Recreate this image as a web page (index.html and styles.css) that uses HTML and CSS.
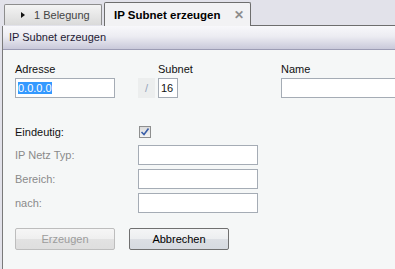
FILE: index.html
```html
<!DOCTYPE html>
<html lang="de">
<head>
    <meta charset="UTF-8">
    <title>IP Subnet erzeugen</title>
    <link rel="stylesheet" href="styles.css">
</head>
<body>
    <div class="tabstrip">
        <div class="tab">
            <span class="tab-arrow"></span>
            <span>1 Belegung</span>
        </div>
        <div class="tab tab-active">
            <span>IP Subnet erzeugen</span>
            <span class="tab-close">✕</span>
        </div>
        <div class="tab-rest"></div>
    </div>

    <div class="panel">
        <div class="panel-title">IP Subnet erzeugen</div>

        <div class="panel-body">
            <div class="top-row">
                <div class="field field-addr">
                    <label>Adresse</label>
                    <div class="textbox"><span class="selected">0.0.0.0</span></div>
                </div>
                <div class="slash">/</div>
                <div class="field field-subnet">
                    <label>Subnet</label>
                    <div class="textbox">16</div>
                </div>
                <div class="field field-name">
                    <label>Name</label>
                    <div class="textbox"></div>
                </div>
            </div>

            <div class="form-grid">
                <label class="form-label form-label-on">Eindeutig:</label>
                <div class="checkbox">
                    <svg width="10" height="10" viewBox="0 0 10 10">
                        <path d="M1.5 5 L4 7.5 L8.5 1.5" fill="none" stroke="#3b5fa8" stroke-width="1.6"/>
                    </svg>
                </div>

                <label class="form-label">IP Netz Typ:</label>
                <div class="textbox"></div>

                <label class="form-label">Bereich:</label>
                <div class="textbox"></div>

                <label class="form-label">nach:</label>
                <div class="textbox"></div>
            </div>

            <div class="buttons">
                <button class="btn btn-disabled">Erzeugen</button>
                <button class="btn">Abbrechen</button>
            </div>
        </div>
    </div>
</body>
</html>
```

FILE: styles.css
```css
:root {
    --frame: #e2e2ea;
    --panel-bg: #f5f7f7;
    --border-dark: #6e6e6e;
    --input-border: #a5acb5;
    --label-gray: #8a8a8a;
}

html, body {
    margin: 0;
    padding: 0;
}

body {
    width: 395px;
    height: 269px;
    overflow: hidden;
    background-color: var(--frame);
    font-family: 'Liberation Sans', Arial, sans-serif;
    font-size: 11px;
    color: #111;
}

/* tabs */

.tabstrip {
    display: flex;
    align-items: flex-end;
    height: 26px;
    padding-left: 4px;
    box-sizing: border-box;
}

.tab {
    display: flex;
    align-items: center;
    flex-shrink: 0;
    box-sizing: border-box;
    height: 21px;
    width: 98px;
    margin-bottom: 1px;
    padding-left: 16px;
    border: 1px solid #8d8d8d;
    border-bottom: none;
    border-radius: 2px 2px 0 0;
    background: linear-gradient(#f4f4f4, #dadada);
    color: #444;
    font-size: 11px;
}

.tab-arrow {
    width: 0;
    height: 0;
    border-top: 3.5px solid transparent;
    border-bottom: 3.5px solid transparent;
    border-left: 4px solid #111;
    margin-right: 9px;
}

.tab-active {
    width: 147px;
    height: 24px;
    margin-left: 2px;
    margin-bottom: 0;
    padding-left: 9px;
    border-color: var(--border-dark);
    background: #f2f2f4;
    color: #000;
    font-weight: bold;
    font-size: 11.5px;
}

.tab-close {
    margin-left: 13px;
    color: #8c8c8c;
    font-size: 12px;
    font-weight: bold;
}

.tab-rest {
    flex: 1;
    height: 1px;
    background-color: var(--border-dark);
}

/* panel */

.panel {
    margin-left: 2px;
    border-left: 1px solid #7a7a7a;
    background-color: var(--panel-bg);
    height: 243px;
    overflow: hidden;
}

.panel-title {
    height: 24px;
    box-sizing: border-box;
    padding-left: 6px;
    line-height: 23px;
    font-size: 11px;
    color: #1e1a34;
    background: linear-gradient(#f8f8fb 0%, #ececf2 45%, #c9c9da 100%);
    border-bottom: 1px solid #9c9cb4;
}

.panel-body {
    padding: 12px 0 0 12px;
}

.top-row {
    display: flex;
    align-items: flex-end;
}

.field {
    display: flex;
    flex-direction: column;
    flex-shrink: 0;
}

.field label {
    line-height: 14px;
    margin-bottom: 2px;
    color: #111;
    white-space: nowrap;
}

.textbox {
    box-sizing: border-box;
    height: 20px;
    border: 1px solid var(--input-border);
    background-color: #fff;
    padding: 2px 2px;
    line-height: 14px;
    font-size: 11px;
    white-space: nowrap;
    overflow: hidden;
}

.selected {
    background-color: #3399ff;
    color: #fff;
}

.field-addr .textbox {
    width: 100px;
}

.slash {
    flex-shrink: 0;
    box-sizing: border-box;
    width: 17px;
    height: 20px;
    margin-left: 23px;
    background-color: #eceeee;
    color: #93a4bb;
    text-align: center;
    line-height: 20px;
}

.field-subnet {
    width: 20px;
    margin-left: 3px;
}

.field-subnet .textbox {
    width: 20px;
}

.field-name {
    margin-left: 103px;
}

.field-name .textbox {
    width: 150px;
}

.form-grid {
    display: grid;
    grid-template-columns: 123px 120px;
    grid-template-rows: 15px 20px 20px 20px;
    row-gap: 4px;
    margin-top: 28px;
}

.form-label {
    align-self: center;
    color: var(--label-gray);
}

.form-label-on {
    align-self: start;
    line-height: 13px;
    color: #111;
}

.checkbox {
    box-sizing: border-box;
    width: 12px;
    height: 12px;
    margin-left: 1px;
    border: 1px solid #8e8f8f;
    background: linear-gradient(#dcdcdc, #f4f4f4);
    display: flex;
    align-items: center;
    justify-content: center;
}

.buttons {
    display: flex;
    gap: 14px;
    margin-top: 15px;
}

.btn {
    box-sizing: border-box;
    width: 100px;
    height: 22px;
    padding: 0;
    border: 1px solid #707070;
    border-radius: 2px;
    background: linear-gradient(#f4f5f6 0%, #eceef0 50%, #dcdfe4 51%, #d6dae0 100%);
    font-family: 'Liberation Sans', Arial, sans-serif;
    font-size: 11px;
    color: #000;
}

.btn-disabled {
    border-color: #bdbdbd;
    background: linear-gradient(#f6f6f6 0%, #efefef 50%, #e2e2e2 51%, #dedede 100%);
    color: #9c9c9c;
}
```
